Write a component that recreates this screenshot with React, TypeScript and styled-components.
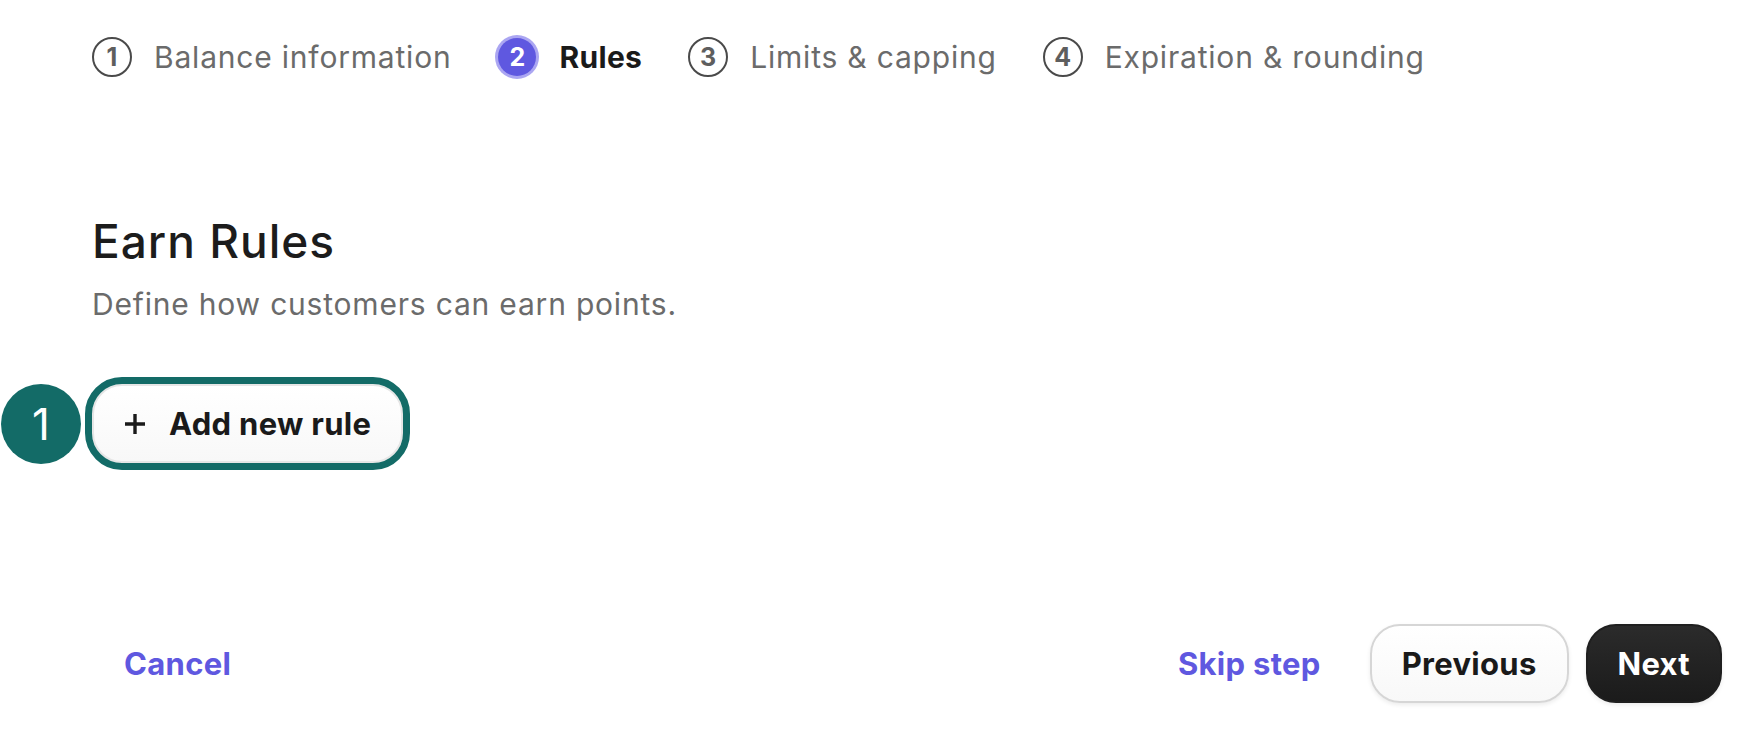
import React from "react";
import styled, { createGlobalStyle } from "styled-components";

const GlobalStyle = createGlobalStyle`
  * {
    box-sizing: border-box;
  }
  html, body {
    margin: 0;
    padding: 0;
    background: #ffffff;
    font-family: Inter, "Noto Sans", Arial, sans-serif;
    -webkit-font-smoothing: antialiased;
  }
`;

const Page = styled.div`
  min-height: 100vh;
  display: flex;
  flex-direction: column;
  padding: 37px 24px 39px 92px;
`;

const Stepper = styled.ol`
  list-style: none;
  margin: 0;
  padding: 0;
  display: flex;
  align-items: center;
  gap: 46px;
`;

const Step = styled.li`
  display: flex;
  align-items: center;
  gap: 22px;
  height: 40px;
`;

const StepCircle = styled.span<{ $active?: boolean }>`
  display: flex;
  align-items: center;
  justify-content: center;
  border-radius: 50%;
  font-size: 25px;
  font-weight: 700;
  width: ${(p) => (p.$active ? "38px" : "40px")};
  height: ${(p) => (p.$active ? "38px" : "40px")};
  margin: ${(p) => (p.$active ? "1px" : "0")};
  color: ${(p) => (p.$active ? "#ffffff" : "#5e5e5e")};
  background: ${(p) => (p.$active ? "#5f58e0" : "transparent")};
  border: ${(p) => (p.$active ? "none" : "2px solid #4a4a4a")};
  box-shadow: ${(p) => (p.$active ? "0 0 0 3px #aba6f2" : "none")};
`;

const StepLabel = styled.span<{ $active?: boolean }>`
  font-size: 30px;
  line-height: 40px;
  letter-spacing: ${(p) => (p.$active ? "0.3px" : "0.8px")};
  font-weight: ${(p) => (p.$active ? 700 : 400)};
  color: ${(p) => (p.$active ? "#1a1a1a" : "#6b6b6b")};
`;

const Section = styled.section`
  margin-top: 137px;
`;

const Heading = styled.h1`
  margin: 0;
  font-size: 46px;
  line-height: 54px;
  letter-spacing: 1px;
  font-weight: 500;
  color: #1c1c1c;
`;

const Description = styled.p`
  margin: 16px 0 0;
  font-size: 30px;
  line-height: 40px;
  letter-spacing: 0.8px;
  color: #6b6b6b;
`;

const Highlight = styled.div`
  position: relative;
  margin-top: 60px;
  align-self: flex-start;
`;

const Marker = styled.span`
  position: absolute;
  left: -91px;
  top: 50%;
  transform: translateY(-50%);
  width: 80px;
  height: 80px;
  border-radius: 50%;
  background: #136b67;
  color: #ffffff;
  display: flex;
  align-items: center;
  justify-content: center;
  font-size: 44px;
  font-weight: 400;
`;

const Button = styled.button<{ $variant?: "primary" | "secondary" | "link" }>`
  display: inline-flex;
  align-items: center;
  gap: 23px;
  height: 79px;
  padding: 0 30px;
  border-radius: 30px;
  font-family: inherit;
  font-size: 31px;
  letter-spacing: 0.3px;
  font-weight: 700;
  cursor: pointer;
  border: 2px solid
    ${(p) =>
      p.$variant === "primary"
        ? "#1f1f1f"
        : p.$variant === "link"
        ? "transparent"
        : "#d6d6d6"};
  color: ${(p) =>
    p.$variant === "primary"
      ? "#ffffff"
      : p.$variant === "link"
      ? "#5f58e0"
      : "#1a1a1a"};
  background: ${(p) =>
    p.$variant === "primary"
      ? "linear-gradient(#2b2b2b, #1b1b1b)"
      : p.$variant === "link"
      ? "transparent"
      : "linear-gradient(#ffffff, #f8f8f8)"};
  box-shadow: ${(p) =>
    p.$variant === "link" ? "none" : "0 2px 4px rgba(0, 0, 0, 0.08)"};
`;

const AddButton = styled(Button)`
  outline: 7px solid #136b67;
  outline-offset: 0;
  border-color: #e6e6e6;
`;

const Footer = styled.footer`
  margin-top: auto;
  display: flex;
  align-items: center;
  justify-content: space-between;
`;

const Actions = styled.div`
  display: flex;
  align-items: center;
  gap: 17px;
`;

const PlusIcon = () => (
  <svg width="22" height="22" viewBox="0 0 22 22" fill="none">
    <path d="M11 1v20M1 11h20" stroke="#1a1a1a" strokeWidth="3.4" />
  </svg>
);

const steps = [
  "Balance information",
  "Rules",
  "Limits & capping",
  "Expiration & rounding",
];

export default function App() {
  const current = 1;
  return (
    <>
      <GlobalStyle />
      <Page>
        <Stepper>
          {steps.map((label, i) => (
            <Step key={label}>
              <StepCircle $active={i === current}>{i + 1}</StepCircle>
              <StepLabel $active={i === current}>{label}</StepLabel>
            </Step>
          ))}
        </Stepper>
        <Section>
          <Heading>Earn Rules</Heading>
          <Description>Define how customers can earn points.</Description>
        </Section>
        <Highlight>
          <Marker>1</Marker>
          <AddButton>
            <PlusIcon />
            Add new rule
          </AddButton>
        </Highlight>
        <Footer>
          <Button $variant="link">Cancel</Button>
          <Actions>
            <Button $variant="link">Skip step</Button>
            <Button>Previous</Button>
            <Button $variant="primary">Next</Button>
          </Actions>
        </Footer>
      </Page>
    </>
  );
}
